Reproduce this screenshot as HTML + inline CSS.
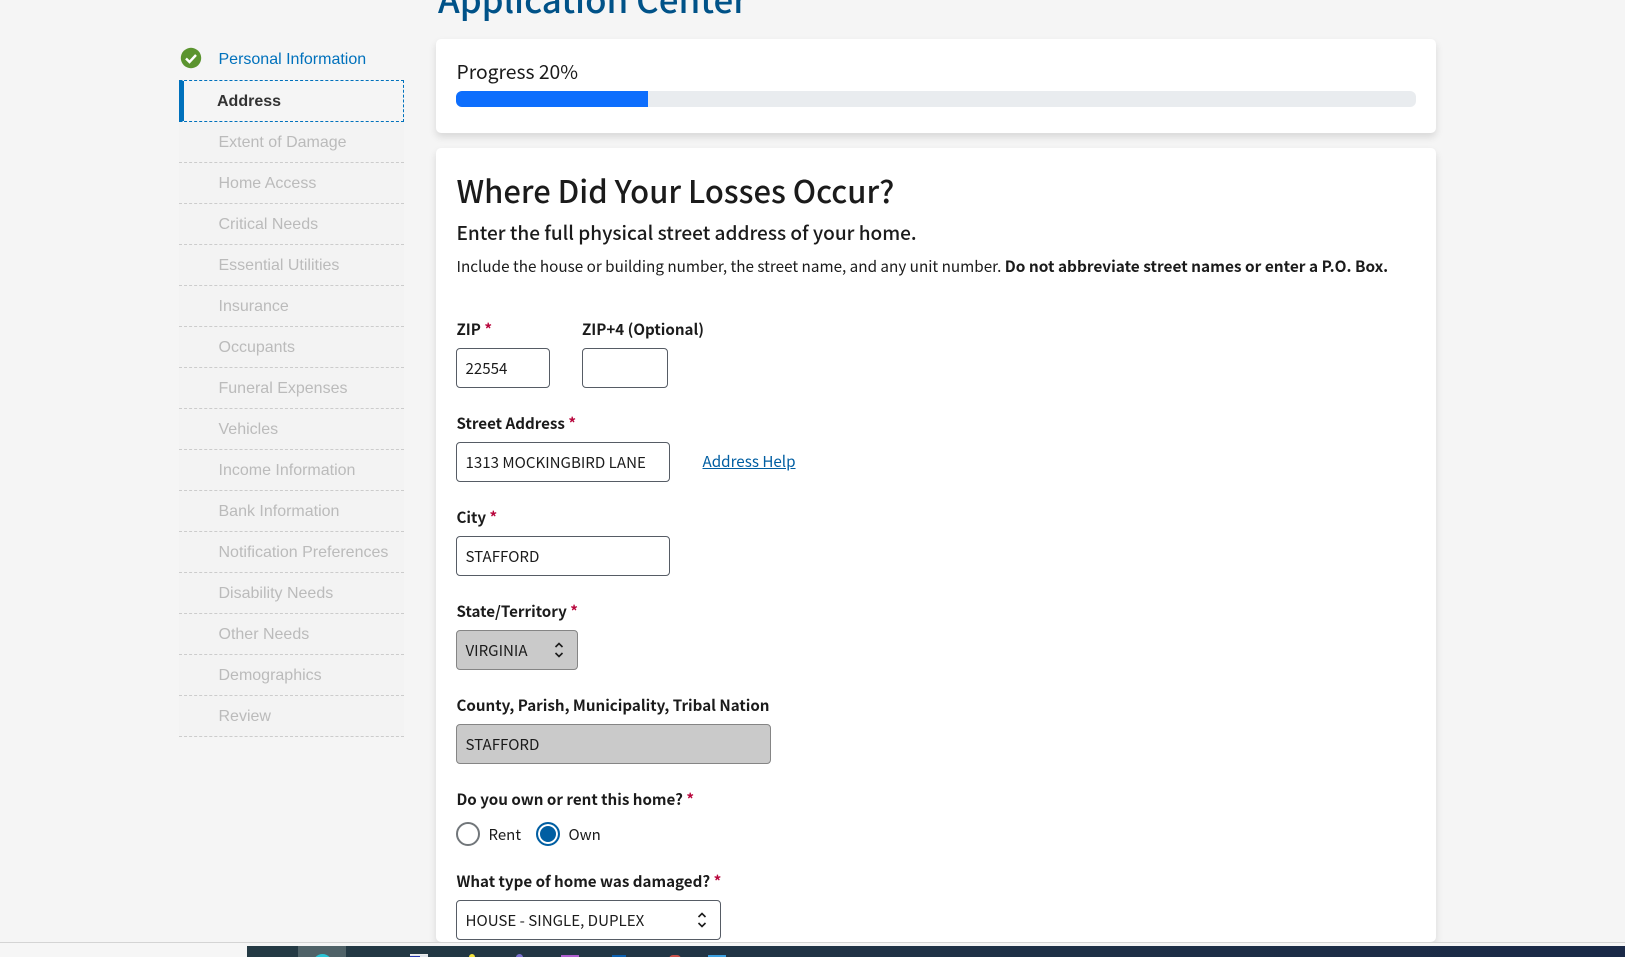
<!DOCTYPE html>
<html lang="en"><head><meta charset="utf-8"><title>Application Center</title>
<style>
html,body{margin:0;padding:0;width:1625px;height:957px;overflow:hidden;background:#f5f5f5}
body{position:relative;font-family:"Noto Sans CJK JP","Liberation Sans",sans-serif;color:#1b1b1b}
.a{position:absolute;white-space:nowrap}
.card{position:absolute;left:436px;width:1000px;background:#fff;border-radius:5px;box-shadow:0 4px 8px rgba(0,0,0,.12)}
.nav{position:absolute;left:179px;width:225px;height:41px;background:#f3f3f3;border-bottom:1px dashed #ccc;box-sizing:border-box;font:16px/41px "Liberation Sans",sans-serif;color:#bbb;padding-left:39.500px;white-space:nowrap}
.lbl{position:absolute;left:456.500px;font-size:15.150px;font-weight:700;line-height:21px;color:#1b1b1b;white-space:nowrap}
.lbl i{font-style:normal;color:#b8063c}
.inp{position:absolute;box-sizing:border-box;height:40px;border:1px solid #565c65;border-radius:4px;background:#fff;font-size:15.100px;line-height:38px;padding-left:8.500px;white-space:nowrap}
.dis{background:#cacaca;border-color:#858585}
.chev{position:absolute;right:13px;top:10px}
.tb{position:absolute}
</style></head><body>
<div class="a" style="left:438px;top:-23px;font-size:34.900px;line-height:44px;color:#005288;font-weight:500">Application Center</div>

<svg class="a" style="left:180px;top:47px" width="22" height="22" viewBox="0 0 22 22"><circle cx="11" cy="11" r="10.200" fill="#5b942f"/><path d="M6 11.500l3.500 3.500L16 8" fill="none" stroke="#fff" stroke-width="2.400"/></svg>
<div class="a" style="left:218.500px;top:49px;font:16px/21px 'Liberation Sans',sans-serif;color:#0071bc">Personal Information</div>
<div class="a" style="left:179px;top:80px;width:225px;height:42px;box-sizing:border-box;border:1px dashed #0071bc;border-left:5px solid #0071bc;font:700 16px/42px 'Liberation Sans',sans-serif;color:#333;padding-left:33px">Address</div>
<div class="nav" style="top:122px">Extent of Damage</div>
<div class="nav" style="top:163px">Home Access</div>
<div class="nav" style="top:204px">Critical Needs</div>
<div class="nav" style="top:245px">Essential Utilities</div>
<div class="nav" style="top:286px">Insurance</div>
<div class="nav" style="top:327px">Occupants</div>
<div class="nav" style="top:368px">Funeral Expenses</div>
<div class="nav" style="top:409px">Vehicles</div>
<div class="nav" style="top:450px">Income Information</div>
<div class="nav" style="top:491px">Bank Information</div>
<div class="nav" style="top:532px">Notification Preferences</div>
<div class="nav" style="top:573px">Disability Needs</div>
<div class="nav" style="top:614px">Other Needs</div>
<div class="nav" style="top:655px">Demographics</div>
<div class="nav" style="top:696px">Review</div>

<div class="card" style="top:39px;height:94px"></div>
<div class="a" style="left:456.500px;top:58px;font-size:19.300px;line-height:26px">Progress 20%</div>
<div class="a" style="left:456px;top:91px;width:960px;height:16px;border-radius:6px;background:#e9ecef;overflow:hidden"><div style="width:192px;height:16px;background:#0d6efd"></div></div>

<div class="card" style="top:148px;height:794px"></div>
<div class="a" style="left:456.500px;top:167px;font-size:30.950px;line-height:46px;font-weight:500">Where Did Your Losses Occur?</div>
<div class="a" style="left:456.500px;top:218px;font-size:19.050px;line-height:30px;font-weight:500">Enter the full physical street address of your home.</div>
<div class="a" style="left:456.500px;top:254px;font-size:15.250px;line-height:24px">Include the house or building number, the street name, and any unit number. <b style="font-size:15.400px">Do not abbreviate street names or enter a P.O. Box.</b></div>

<div class="lbl" style="top:319px">ZIP <i>*</i></div>
<div class="lbl" style="top:319px;left:582px">ZIP+4 (Optional)</div>
<div class="inp" style="left:456px;top:348px;width:94px">22554</div>
<div class="inp" style="left:582px;top:348px;width:86px"></div>

<div class="lbl" style="top:413px">Street Address <i>*</i></div>
<div class="inp" style="left:456px;top:442px;width:214px">1313 MOCKINGBIRD LANE</div>
<div class="a" style="left:702.500px;top:450px;font-size:15.200px;line-height:22px;color:#005ea2;text-decoration:underline">Address Help</div>

<div class="lbl" style="top:507px">City <i>*</i></div>
<div class="inp" style="left:456px;top:536px;width:214px">STAFFORD</div>

<div class="lbl" style="top:601px">State/Territory <i>*</i></div>
<div class="inp dis" style="left:456px;top:630px;width:122px">VIRGINIA
<svg class="chev" width="10" height="18" viewBox="0 0 10 18"><path d="M1.500 6L5 2.500 8.500 6M1.500 12L5 15.500 8.500 12" fill="none" stroke="#1b1b1b" stroke-width="1.600"/></svg></div>

<div class="lbl" style="top:695px">County, Parish, Municipality, Tribal Nation</div>
<div class="inp dis" style="left:456px;top:724px;width:315px">STAFFORD</div>

<div class="lbl" style="top:789px">Do you own or rent this home? <i>*</i></div>
<div class="a" style="left:456px;top:822px;width:24px;height:24px;box-sizing:border-box;border:2px solid #71767a;border-radius:50%;background:#fff"></div>
<div class="a" style="left:488.500px;top:824px;font-size:15px;line-height:22px">Rent</div>
<div class="a" style="left:536px;top:822px;width:24px;height:24px;box-sizing:border-box;border:2px solid #005ea2;border-radius:50%;background:#005ea2;box-shadow:inset 0 0 0 2px #fff"></div>
<div class="a" style="left:568.500px;top:824px;font-size:15px;line-height:22px">Own</div>

<div class="lbl" style="top:871px">What type of home was damaged? <i>*</i></div>
<div class="inp" style="left:456px;top:900px;width:265px">HOUSE - SINGLE, DUPLEX
<svg class="chev" width="10" height="18" viewBox="0 0 10 18"><path d="M1.500 6L5 2.500 8.500 6M1.500 12L5 15.500 8.500 12" fill="none" stroke="#1b1b1b" stroke-width="1.600"/></svg></div>

<div class="a" style="left:0;top:942px;width:1625px;height:4px;background:#f6f6f6;border-top:1px solid #d4d4d4;box-sizing:border-box"></div>
<div class="a" style="left:0;top:946px;width:247px;height:11px;background:#f6f6f6"></div>
<div class="a" style="left:247px;top:946px;width:1378px;height:11px;background:linear-gradient(90deg,#243a44,#1a2947);overflow:hidden">
  <div class="tb" style="left:51px;top:0;width:48px;height:11px;background:#4f6268"></div>
  <div class="tb" style="left:66px;top:8px;width:19px;height:19px;border-radius:50%;background:#2bc4d6"></div>
  <div class="tb" style="left:163px;top:8px;width:18px;height:10px;background:#dfe3ea;border-top:1px solid #eee"><div style="width:10px;height:4px;background:#2233aa;margin-top:1px"></div></div>
  <div class="tb" style="left:222px;top:8px;width:6px;height:6px;border-radius:50%;background:#f2e23a"></div>
  <div class="tb" style="left:269px;top:8px;width:7px;height:7px;border-radius:50%;background:#7a6fd0"></div>
  <div class="tb" style="left:314px;top:9px;width:18px;height:4px;background:#b05fd0"></div>
  <div class="tb" style="left:365px;top:9px;width:14px;height:4px;background:#0a5fb0"></div>
  <div class="tb" style="left:422px;top:9px;width:12px;height:4px;border-radius:6px 6px 0 0;background:#c9504a"></div>
  <div class="tb" style="left:461px;top:9px;width:18px;height:4px;background:#3b9fe0"></div>
</div>
</body></html>
